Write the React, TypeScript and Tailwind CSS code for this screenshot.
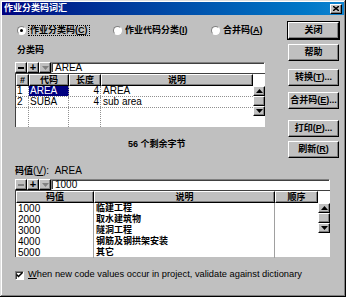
import React from "react";

const raised =
  "bg-[#c0c0c0] border border-t-white border-l-white border-r-black border-b-black shadow-[inset_-1px_-1px_0_#808080]";
const sunken =
  "border border-t-[#808080] border-l-[#808080] border-r-white border-b-white shadow-[inset_1px_1px_0_#404040]";

const Tri = ({ up, gray }: { up?: boolean; gray?: boolean }) => (
  <svg width="7" height="4" viewBox="0 0 7 4">
    <polygon
      points={up ? "0,4 7,4 3.5,0" : "0,0 7,0 3.5,4"}
      fill={gray ? "#808080" : "#000"}
    />
  </svg>
);

const Button = ({
  children,
  def,
  className,
}: {
  children: React.ReactNode;
  def?: boolean;
  className?: string;
}) => (
  <div
    className={`w-[51px] h-[17px] flex items-center justify-center text-[9px] font-bold ${raised} ${
      def ? "outline outline-1 outline-black" : ""
    } ${className ?? ""}`}
  >
    {children}
  </div>
);

const Radio = ({ checked }: { checked?: boolean }) => (
  <div className="w-[9px] h-[9px] rounded-full bg-white border border-t-[#808080] border-l-[#808080] border-r-white border-b-white flex items-center justify-center">
    {checked && <div className="w-[3px] h-[3px] rounded-full bg-black" />}
  </div>
);

const Toolbar = ({ value, minusOff }: { value: string; minusOff?: boolean }) => (
  <div className="flex h-[11px]">
    <div className={`w-[12px] h-[11px] flex items-center justify-center ${raised}`}>
      <div className={`w-[6px] h-[2px] ${minusOff ? "bg-[#808080]" : "bg-black"}`} />
    </div>
    <div className={`w-[12px] h-[11px] flex items-center justify-center ${raised}`}>
      <span className="text-[11px] font-bold leading-none -mt-[1px]">+</span>
    </div>
    <div className={`w-[12px] h-[11px] flex items-center justify-center ${raised}`}>
      <Tri gray />
    </div>
    <div className={`flex-1 h-[11px] bg-white pl-[3px] flex items-center ${sunken}`}>
      {value}
    </div>
  </div>
);

const Scroll = () => (
  <div className="w-[12px] flex flex-col bg-[#e4e4e4]">
    <div className={`h-[10px] flex items-center justify-center ${raised}`}>
      <Tri up />
    </div>
    <div className={`h-[10px] ${raised}`} />
    <div className="flex-1" />
    <div className={`h-[10px] flex items-center justify-center ${raised}`}>
      <Tri />
    </div>
  </div>
);

const Head = ({ w, children }: { w: string; children?: React.ReactNode }) => (
  <div className={`${w} h-[12px] flex items-center justify-center text-[9px] font-bold ${raised}`}>
    {children}
  </div>
);

const rows2 = [
  ["1000", "临建工程"],
  ["2000", "取水建筑物"],
  ["3000", "隧洞工程"],
  ["4000", "钢筋及钢拱架安装"],
  ["5000", "其它"],
];

export default function App() {
  return (
    <div className="w-[346px] h-[297px] bg-[#c0c0c0] p-[2px] overflow-hidden text-black text-[10px] leading-none font-['Liberation_Sans','Noto_Sans_CJK_SC',sans-serif] shadow-[inset_-1px_-1px_0_#000,inset_1px_1px_0_#dfdfdf,inset_-2px_-2px_0_#808080,inset_2px_2px_0_#fff]">
      <div className="h-[13px] flex items-center justify-between px-[2px] bg-linear-to-r from-[#000080] to-[#1084d0]">
        <span className="text-white font-bold text-[9px]">作业分类码词汇</span>
        <div className={`w-[12px] h-[10px] flex items-center justify-center ${raised}`}>
          <svg width="6" height="5" viewBox="0 0 6 5">
            <path d="M0 0L6 5M6 0L0 5" stroke="#000" strokeWidth="1.4" />
          </svg>
        </div>
      </div>

      <div className="flex">
        <div className="w-[263px] pl-[13px] flex flex-col">
          <div className="mt-[10px] h-[10px] flex items-center">
            <div className="w-[98px] pl-[2px] flex items-center gap-[2px]">
              <Radio checked />
              <span className="text-[9px] font-bold border border-dotted border-black px-[1px]">
                作业分类码(<u>C</u>)
              </span>
            </div>
            <div className="w-[98px] flex items-center gap-[3px]">
              <Radio />
              <span className="text-[9px] font-bold">
                作业代码分类(<u>I</u>)
              </span>
            </div>
            <div className="flex items-center gap-[3px]">
              <Radio />
              <span className="text-[9px] font-bold">
                合并码(<u>A</u>)
              </span>
            </div>
          </div>
          <div className="mt-[11px] h-[10px] pl-[2px] text-[9px] font-bold">分类码</div>
          <div className="mt-[6px] w-[250px]">
            <Toolbar value="AREA" />
          </div>
          <div className="w-[250px] h-[54px] flex border-l border-t border-[#404040] bg-white">
            <div className="flex-1 flex flex-col">
              <div className="flex">
                <Head w="w-[13px]">#</Head>
                <Head w="w-[40px]">代码</Head>
                <Head w="w-[32px]">长度</Head>
                <Head w="flex-1">说明</Head>
              </div>
              {[
                ["1", "AREA", "4", "AREA"],
                ["2", "SUBA", "4", "sub area"],
              ].map((r, i) => (
                <div key={i} className="flex h-[11px] border-b border-dotted border-[#909090]">
                  <div className="w-[13px] pl-[1px] flex items-center border-r border-dotted border-[#909090]">{r[0]}</div>
                  <div
                    className={`w-[40px] pl-[1px] flex items-center border-r border-dotted border-[#909090] ${
                      i === 0 ? "bg-[#000080] text-white" : ""
                    }`}
                  >
                    {r[1]}
                  </div>
                  <div className="w-[32px] pr-[1px] flex items-center justify-end border-r border-dotted border-[#909090]">{r[2]}</div>
                  <div className="flex-1 pl-[2px] flex items-center">{r[3]}</div>
                </div>
              ))}
              <div className="flex flex-1">
                <div className="w-[13px] border-r border-dotted border-[#909090]" />
                <div className="w-[40px] border-r border-dotted border-[#909090]" />
                <div className="w-[32px] border-r border-dotted border-[#909090]" />
                <div className="flex-1" />
              </div>
            </div>
            <div className="w-[12px] flex flex-col">
              <div className="h-[12px] bg-white" />
              <Scroll />
            </div>
          </div>
          <div className="mt-[13px] h-[10px] pl-[113px] text-[9px] font-bold">56 个剩余字节</div>
        </div>

        <div className="ml-[23px] flex flex-col">
          <Button def className="mt-[7px]">关闭</Button>
          <Button className="mt-[5px]">帮助</Button>
          <Button className="mt-[8px]">
            转换(<u>T</u>)...
          </Button>
          <Button className="mt-[6px]">
            合并码(<u>E</u>)...
          </Button>
          <Button className="mt-[11px]">
            打印(<u>P</u>)...
          </Button>
          <Button className="mt-[4px]">
            刷新(<u>R</u>)
          </Button>
        </div>
      </div>

      <div className="pl-[13px] flex flex-col">
        <div className="mt-[8px] h-[10px] flex items-center">
          <span className="text-[9px] font-bold">码值</span>
          <span>
            (<u>V</u>): &nbsp;AREA
          </span>
        </div>
        <div className="mt-[3px] w-[315px]">
          <Toolbar value="1000" minusOff />
        </div>
        <div className="w-[315px] h-[67px] flex border-l border-t border-[#404040] bg-white">
          <div className="flex-1 flex flex-col">
            <div className="flex">
              <Head w="w-[78px]">码值</Head>
              <Head w="flex-1">说明</Head>
              <Head w="w-[43px]">顺序</Head>
            </div>
            <div className="flex flex-1">
              <div className="w-[78px] flex flex-col border-r border-[#a0a0a0]">
                {rows2.map((r) => (
                  <div key={r[0]} className="h-[11px] pl-[2px] flex items-center">
                    {r[0]}
                  </div>
                ))}
              </div>
              <div className="flex-1 flex flex-col border-r border-[#a0a0a0]">
                {rows2.map((r) => (
                  <div key={r[0]} className="h-[11px] pl-[2px] flex items-center text-[9px] font-bold">
                    {r[1]}
                  </div>
                ))}
              </div>
              <div className="w-[43px]" />
            </div>
          </div>
          <div className="w-[12px] flex flex-col">
            <div className="h-[12px] bg-white" />
            <Scroll />
          </div>
        </div>
        <div className="mt-[13px] h-[10px] flex items-center gap-[4px]">
          <div className={`w-[9px] h-[9px] bg-white flex items-center justify-center ${sunken}`}>
            <svg width="7" height="6" viewBox="0 0 7 6">
              <path d="M0.5 2.5L2.5 4.5L6.5 0.5" stroke="#000" strokeWidth="1.5" fill="none" />
            </svg>
          </div>
          <span className="text-[9.3px]">
            <u>W</u>hen new code values occur in project, validate against dictionary
          </span>
        </div>
      </div>
    </div>
  );
}
